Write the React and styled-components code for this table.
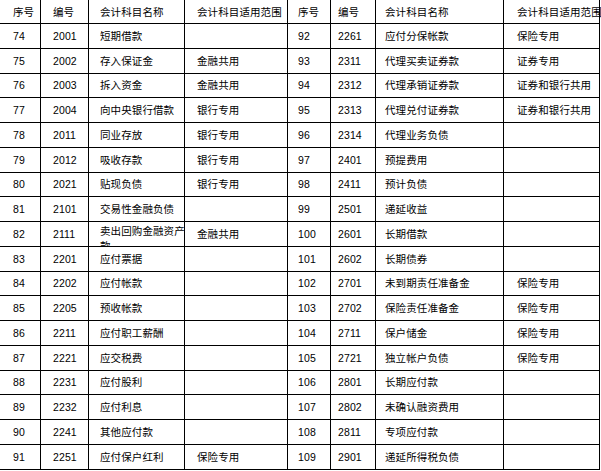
import React from "react";
import styled, { createGlobalStyle } from "styled-components";

const GlobalStyle = createGlobalStyle`
  body {
    margin: 0;
    background: #fff;
    font-family: "Liberation Sans", "Noto Sans CJK SC", sans-serif;
  }
`;

// line positions in the sheet: 40, 88, 184, 287, 330, 375, 503, 599
const columns = [
  { width: 41, pad: 13 },
  { width: 48, pad: 12 },
  { width: 96, pad: 11 },
  { width: 103, pad: 12 },
  { width: 43, pad: 10 },
  { width: 45, pad: 7 },
  { width: 128, pad: 9 },
  { width: 96, pad: 13 },
];

const header = ["序号", "编号", "会计科目名称", "会计科目适用范围"];

const left = [
  ["74", "2001", "短期借款", ""],
  ["75", "2002", "存入保证金", "金融共用"],
  ["76", "2003", "拆入资金", "金融共用"],
  ["77", "2004", "向中央银行借款", "银行专用"],
  ["78", "2011", "同业存放", "银行专用"],
  ["79", "2012", "吸收存款", "银行专用"],
  ["80", "2021", "贴现负债", "银行专用"],
  ["81", "2101", "交易性金融负债", ""],
  ["82", "2111", "卖出回购金融资产\n款", "金融共用"],
  ["83", "2201", "应付票据", ""],
  ["84", "2202", "应付帐款", ""],
  ["85", "2205", "预收帐款", ""],
  ["86", "2211", "应付职工薪酬", ""],
  ["87", "2221", "应交税费", ""],
  ["88", "2231", "应付股利", ""],
  ["89", "2232", "应付利息", ""],
  ["90", "2241", "其他应付款", ""],
  ["91", "2251", "应付保户红利", "保险专用"],
];

const right = [
  ["92", "2261", "应付分保帐款", "保险专用"],
  ["93", "2311", "代理买卖证券款", "证券专用"],
  ["94", "2312", "代理承销证券款", "证券和银行共用"],
  ["95", "2313", "代理兑付证券款", "证券和银行共用"],
  ["96", "2314", "代理业务负债", ""],
  ["97", "2401", "预提费用", ""],
  ["98", "2411", "预计负债", ""],
  ["99", "2501", "递延收益", ""],
  ["100", "2601", "长期借款", ""],
  ["101", "2602", "长期债券", ""],
  ["102", "2701", "未到期责任准备金", "保险专用"],
  ["103", "2702", "保险责任准备金", "保险专用"],
  ["104", "2711", "保户储金", "保险专用"],
  ["105", "2721", "独立帐户负债", "保险专用"],
  ["106", "2801", "长期应付款", ""],
  ["107", "2802", "未确认融资费用", ""],
  ["108", "2811", "专项应付款", ""],
  ["109", "2901", "递延所得税负债", ""],
];

const Sheet = styled.div`
  display: grid;
  grid-template-columns: ${columns.map((c) => `${c.width}px`).join(" ")};
  grid-template-rows: 24px repeat(18, 24.75px);
  width: 600px;
  color: #000;
  font-size: 10.5px;
`;

const Cell = styled.div`
  box-sizing: border-box;
  display: flex;
  align-items: ${(p) => (p.$wrap ? "flex-start" : "center")};
  padding-left: ${(p) => p.$pad}px;
  padding-top: ${(p) => (p.$wrap ? 2 : 0)}px;
  border-bottom: 1px solid #000;
  border-right: 1px solid #000;
  white-space: pre;
  line-height: ${(p) => (p.$wrap ? 15 : 12)}px;
  letter-spacing: 0.1px;
  overflow: ${(p) => (p.$wrap ? "hidden" : "visible")};
`;

function App() {
  const rows = [[...header, ...header]].concat(
    left.map((row, i) => [...row, ...right[i]])
  );

  return (
    <>
      <GlobalStyle />
      <Sheet>
        {rows.map((row, r) =>
          row.map((text, c) => (
            <Cell
              key={`${r}-${c}`}
              $pad={columns[c].pad}
              $wrap={text.includes("\n")}
            >
              {text}
            </Cell>
          ))
        )}
      </Sheet>
    </>
  );
}

export default App;
